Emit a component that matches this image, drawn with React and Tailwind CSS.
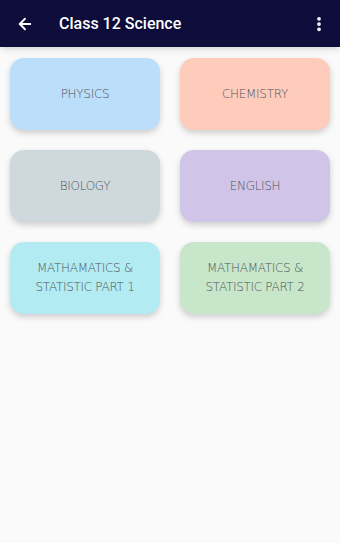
import { ArrowLeft, EllipsisVertical } from 'lucide-react';

const subjects = [
  { name: 'PHYSICS', bg: 'bg-[#bbdefb]' },
  { name: 'CHEMISTRY', bg: 'bg-[#ffccbc]' },
  { name: 'BIOLOGY', bg: 'bg-[#cfd8dc]' },
  { name: 'ENGLISH', bg: 'bg-[#d1c4e9]' },
  { name: 'MATHAMATICS & STATISTIC PART 1', bg: 'bg-[#b2ebf2]' },
  { name: 'MATHAMATICS & STATISTIC PART 2', bg: 'bg-[#c8e6c9]' },
];

export default function App() {
  return (
    <div className="flex flex-col h-[543px] w-[340px] bg-[#fafafa] font-['Roboto',sans-serif]">
      {/* Toolbar */}
      <header className="flex items-center h-[47px] bg-[#0d0c3b] text-white px-4 shadow-md flex-shrink-0">
        <ArrowLeft size={18} strokeWidth={2.5} />
        <h1 className="ml-[25px] text-[16px] font-medium">Class 12 Science</h1>
        <EllipsisVertical size={18} strokeWidth={3} className="ml-auto -mr-1" />
      </header>

      {/* Subject grid */}
      <main className="grid grid-cols-2 gap-x-[20px] gap-y-[20px] px-[10px] pt-[11px]">
        {subjects.map((s) => (
          <button
            key={s.name}
            className={`${s.bg} h-[72px] rounded-[14px] shadow-[0_3px_6px_rgba(0,0,0,0.18)] flex items-center justify-center px-4 text-center text-[12px] leading-[19px] text-[#50565c] font-['DejaVu_Sans',sans-serif] font-light tracking-tight`}
          >
            {s.name}
          </button>
        ))}
      </main>
    </div>
  );
}
